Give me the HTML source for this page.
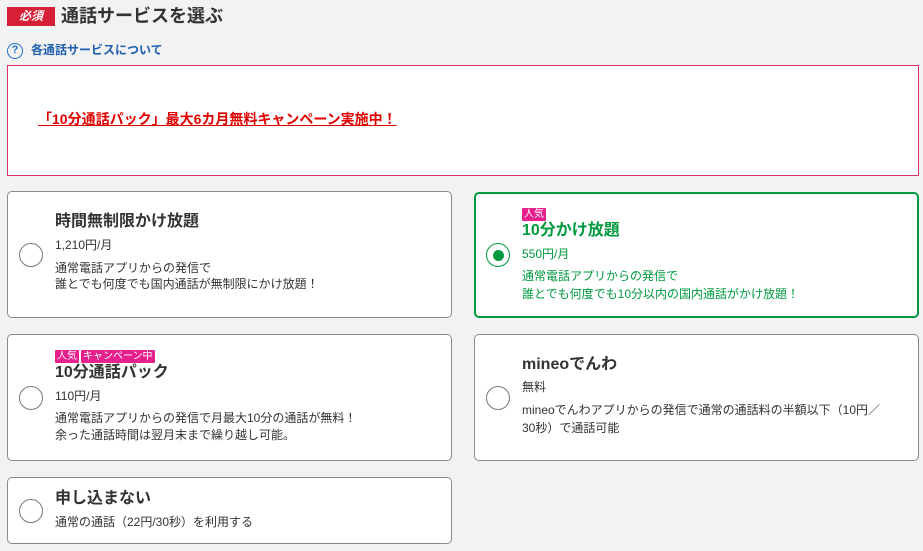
<!DOCTYPE html>
<html><head><meta charset="utf-8"><style>
*{margin:0;padding:0;box-sizing:border-box}
body{width:923px;height:551px;background:#f2f2f2;font-family:"Liberation Sans","Noto Sans CJK JP",sans-serif;color:#333;position:relative;overflow:hidden}
.a{position:absolute;white-space:nowrap}
.card{position:absolute;background:#fff;border:1px solid #8a8a8a;border-radius:5px}
.sel{border:2px solid #009a3e}
.radio{position:absolute;width:24px;height:24px;border:1.5px solid #777;border-radius:50%;background:#fff}
.t{font-size:16px;font-weight:bold;line-height:20px}
.s{font-size:12px;line-height:16px}
.tag{position:absolute;background:#e6208c;color:#fff;font-size:10px;line-height:13px;padding:0 2px;border-radius:1px}
</style></head><body>
<div class="a" style="left:7px;top:7px;width:48px;height:19px;background:#d71f35;color:#fff;font-size:12px;font-weight:bold;font-style:italic;text-align:center;line-height:19px">必須</div>
<div class="a" style="left:61px;top:4px;font-size:18px;font-weight:bold;line-height:24px;color:#333">通話サービスを選ぶ</div>
<div class="a" style="left:7px;top:43px;width:16px;height:16px;border:1.5px solid #1f6fc8;border-radius:50%;color:#1f6fc8;font-size:11px;font-weight:bold;text-align:center;line-height:13px">?</div>
<div class="a" style="left:31px;top:42px;font-size:12px;font-weight:bold;color:#1f5fae;line-height:16px">各通話サービスについて</div>
<div class="a" style="left:7px;top:65px;width:912px;height:111px;background:#fff;border:1px solid #d6306e"></div>
<div class="a" style="left:38px;top:110px;font-size:14px;font-weight:bold;color:#e00000;text-decoration:underline;line-height:19px">「10分通話パック」最大6カ月無料キャンペーン実施中！</div>

<div class="card" style="left:7px;top:191px;width:445px;height:127px"></div>
<div class="radio" style="left:19px;top:243px"></div>
<div class="a t" style="left:55px;top:212px">時間無制限かけ放題</div>
<div class="a s" style="left:55px;top:237px">1,210円/月</div>
<div class="a s" style="left:55px;top:260px">通常電話アプリからの発信で</div>
<div class="a s" style="left:55px;top:276px">誰とでも何度でも国内通話が無制限にかけ放題！</div>

<div class="card sel" style="left:474px;top:192px;width:445px;height:126px"></div>
<div class="radio" style="left:486px;top:243px;border-color:#009a3e"></div>
<div class="a" style="left:493px;top:250px;width:11px;height:11px;border-radius:50%;background:#009a3e"></div>
<div class="tag" style="left:522px;top:208px">人気</div>
<div class="a t" style="left:522px;top:221px;color:#009a3e">10分かけ放題</div>
<div class="a s" style="left:522px;top:246px;color:#009a3e">550円/月</div>
<div class="a s" style="left:522px;top:268px;color:#009a3e">通常電話アプリからの発信で</div>
<div class="a s" style="left:522px;top:286px;color:#009a3e">誰とでも何度でも10分以内の国内通話がかけ放題！</div>

<div class="card" style="left:7px;top:334px;width:445px;height:127px"></div>
<div class="radio" style="left:19px;top:386px"></div>
<div class="tag" style="left:55px;top:350px">人気</div>
<div class="tag" style="left:81px;top:350px">キャンペーン中</div>
<div class="a t" style="left:55px;top:363px">10分通話パック</div>
<div class="a s" style="left:55px;top:388px">110円/月</div>
<div class="a s" style="left:55px;top:410px">通常電話アプリからの発信で月最大10分の通話が無料！</div>
<div class="a s" style="left:55px;top:427px">余った通話時間は翌月末まで繰り越し可能。</div>

<div class="card" style="left:474px;top:334px;width:445px;height:127px"></div>
<div class="radio" style="left:486px;top:386px"></div>
<div class="a t" style="left:522px;top:355px">mineoでんわ</div>
<div class="a s" style="left:522px;top:379px">無料</div>
<div class="a s" style="left:522px;top:402px">mineoでんわアプリからの発信で通常の通話料の半額以下（10円／</div>
<div class="a s" style="left:522px;top:420px">30秒）で通話可能</div>

<div class="card" style="left:7px;top:477px;width:445px;height:67px"></div>
<div class="radio" style="left:19px;top:499px"></div>
<div class="a t" style="left:55px;top:489px">申し込まない</div>
<div class="a s" style="left:55px;top:514px">通常の通話（22円/30秒）を利用する</div>
</body></html>
